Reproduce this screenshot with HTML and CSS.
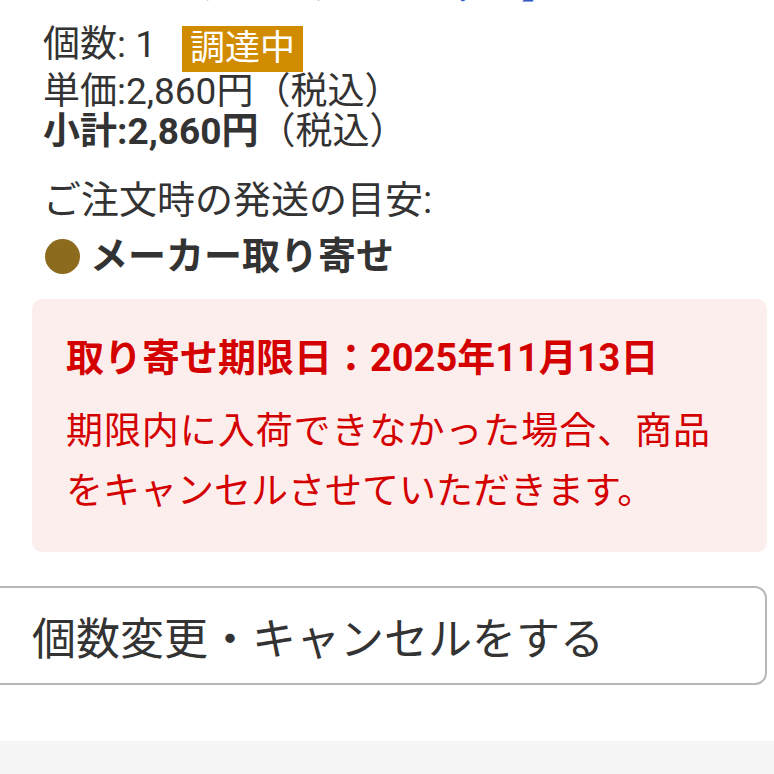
FILE: index.html
```html
<!DOCTYPE html>
<html lang="ja">
<head>
    <meta charset="UTF-8">
    <meta name="viewport" content="width=device-width, initial-scale=1.0">
    <title>注文内容</title>
    <link rel="stylesheet" href="styles.css">
</head>
<body>
    <div class="item">
        <a class="item-name" href="#">ブルーライトカット】</a>

        <div class="info">
            <div class="qty-row">
                <span>個数: 1</span>
                <span class="badge">調達中</span>
            </div>
            <div>単価:2,860円（税込）</div>
            <div><b>小計:2,860円</b>（税込）</div>
        </div>

        <div class="ship">
            <div>ご注文時の発送の目安:</div>
            <div class="ship-type"><span class="dot"></span>メーカー取り寄せ</div>
        </div>

        <div class="notice">
            <p class="notice-title">取り寄せ期限日：2025年11月13日</p>
            <p class="notice-text">期限内に入荷できなかった場合、商品をキャンセルさせていただきます。</p>
        </div>

        <button class="change-btn" type="button">個数変更・キャンセルをする</button>
    </div>
    <div class="footer-band"></div>
</body>
</html>
```

FILE: styles.css
```css
body {
    margin: 0;
    padding: 0;
    font-family: Roboto, "Noto Sans CJK JP", sans-serif;
    color: #333;
    background: #fff;
    overflow: hidden;
}

.item {
    padding: 0 7px 0 32px;
}

/* product link, scrolled mostly out of view */
.item-name {
    display: block;
    margin-top: -33px;
    margin-bottom: 18px;
    padding-left: 165px;
    font-size: 36px;
    line-height: 40px;
    color: #2f58c0;
    text-decoration: none;
}

.info,
.ship {
    padding-left: 11px;
    line-height: 40px;
}

.info {
    font-size: 37px;
}

.ship {
    margin-top: 28px;
    font-size: 38px;
}

.qty-row {
    display: flex;
    align-items: flex-start;
}

.badge {
    margin: 1px 0 0 26px;
    padding: 0 8px;
    height: 46px;
    line-height: 46px;
    font-size: 35px;
    color: #fff;
    background: #d18b00;
}

.ship-type {
    display: flex;
    align-items: center;
    margin-top: 16px;
    font-weight: bold;
}

.dot {
    width: 35px;
    height: 35px;
    margin: 0 10px 0 2px;
    border-radius: 50%;
    background: #8c6b1f;
}

.notice {
    margin-top: 23px;
    padding: 29px 57px 30px 34px;
    background: #fdeeee;
    border-radius: 10px;
    color: #d40000;
    font-size: 37px;
    line-height: 60px;
}

.notice p {
    margin: 0;
}

.notice-title {
    font-size: 38px;
    font-weight: bold;
}

.notice-text {
    margin-top: 14px !important;
    text-align: justify;
}

.change-btn {
    display: block;
    width: calc(100% + 72px);
    margin: 34px 0 0 -72px;
    padding: 0 0 0 70px;
    height: 99px;
    text-align: left;
    font-family: inherit;
    font-size: 44px;
    color: #333;
    background: #fff;
    border: 2px solid #b8b8b8;
    border-radius: 12px;
}

.footer-band {
    margin-top: 56px;
    height: 40px;
    background: #f5f5f5;
}
```
